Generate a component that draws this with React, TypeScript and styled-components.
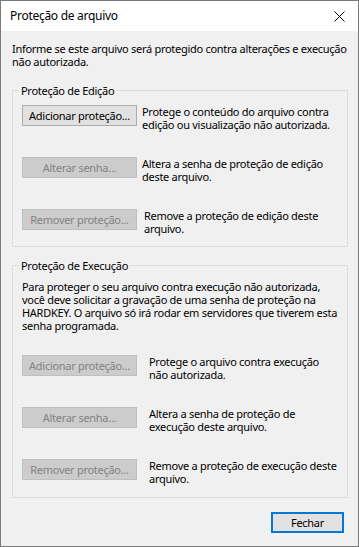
import React from 'react';
import styled, { createGlobalStyle } from 'styled-components';

const GlobalStyle = createGlobalStyle`
  html, body {
    margin: 0;
    padding: 0;
    background: #ffffff;
  }
  body {
    font-family: "Segoe UI", "Noto Sans", "Liberation Sans", sans-serif;
    font-size: 11px;
    letter-spacing: -0.28px;
    color: #000000;
  }
`;

const Window = styled.div`
  box-sizing: border-box;
  width: 359px;
  height: 547px;
  border: 1px solid #7a7a7a;
  background: #f0f0f0;
  display: flex;
  flex-direction: column;
`;

const TitleBar = styled.div`
  height: 30px;
  flex: none;
  background: #ffffff;
  display: flex;
  align-items: center;
  justify-content: space-between;
  padding-left: 9px;
`;

const Title = styled.span`
  font-size: 12px;
  line-height: 14px;
`;

const CloseButton = styled.div`
  width: 38px;
  height: 30px;
  display: flex;
  align-items: center;
  justify-content: center;
`;

const Body = styled.div`
  flex: 1;
  display: flex;
  flex-direction: column;
  padding: 11px 10px 0 11px;
`;

const Text = styled.div`
  line-height: 13px;
  white-space: nowrap;
`;

const Group = styled.fieldset<{ $top: number; $bottom: number }>`
  margin: ${(p) => p.$top}px 0 0 0;
  padding: 8px 10px ${(p) => p.$bottom}px 9px;
  border: 1px solid #dcdcdc;
  min-width: 0;
`;

const Legend = styled.legend`
  margin-left: -3px;
  padding: 0 2px;
  line-height: 13px;
`;

const Rows = styled.div<{ $top?: number }>`
  display: flex;
  flex-direction: column;
  gap: 26px;
  margin-top: ${(p) => p.$top || 0}px;
`;

const Row = styled.div`
  display: flex;
  align-items: flex-start;
  height: 26px;
`;

const Button = styled.button<{ $disabled?: boolean }>`
  box-sizing: border-box;
  width: 115px;
  height: 21px;
  flex: none;
  padding: 0;
  margin: 0;
  font-family: inherit;
  font-size: inherit;
  letter-spacing: inherit;
  line-height: 13px;
  border: 1px solid ${(p) => (p.$disabled ? '#bfbfbf' : '#adadad')};
  background: ${(p) => (p.$disabled ? '#cccccc' : '#e1e1e1')};
  color: ${(p) => (p.$disabled ? '#838383' : '#000000')};
  white-space: nowrap;
`;

const Desc = styled(Text)<{ $gap: number }>`
  margin-left: ${(p) => p.$gap}px;
`;

const Footer = styled.div`
  display: flex;
  justify-content: flex-end;
  margin-top: 14px;
  padding-right: 4px;
`;

const DefaultButton = styled.button`
  box-sizing: border-box;
  width: 73px;
  height: 21px;
  padding: 0;
  font-family: inherit;
  font-size: inherit;
  letter-spacing: inherit;
  line-height: 13px;
  color: #000000;
  background: #e1e1e1;
  border: 2px solid #0078d7;
`;

interface Action {
  label: string;
  disabled?: boolean;
  lines: string[];
}

const edicao: Action[] = [
  {
    label: 'Adicionar proteção...',
    lines: ['Protege o conteúdo do arquivo contra', 'edição ou visualização não autorizada.'],
  },
  {
    label: 'Alterar senha...',
    disabled: true,
    lines: ['Altera a senha de proteção de edição', 'deste arquivo.'],
  },
  {
    label: 'Remover proteção...',
    disabled: true,
    lines: ['Remove a proteção de edição deste', 'arquivo.'],
  },
];

const execucao: Action[] = [
  {
    label: 'Adicionar proteção...',
    disabled: true,
    lines: ['Protege o arquivo contra execução', 'não autorizada.'],
  },
  {
    label: 'Alterar senha...',
    disabled: true,
    lines: ['Altera a senha de proteção de', 'execução deste arquivo.'],
  },
  {
    label: 'Remover proteção...',
    disabled: true,
    lines: ['Remove a proteção de execução deste', 'arquivo.'],
  },
];

const Lines = ({ lines }: { lines: string[] }) => (
  <>
    {lines.map((l) => (
      <div key={l}>{l}</div>
    ))}
  </>
);

const ActionList = ({ items, gaps, top }: { items: Action[]; gaps: number[]; top?: number }) => (
  <Rows $top={top}>
    {items.map((a, i) => (
      <Row key={a.label}>
        <Button $disabled={a.disabled}>{a.label}</Button>
        <Desc $gap={gaps[i]}>
          <Lines lines={a.lines} />
        </Desc>
      </Row>
    ))}
  </Rows>
);

export default function App() {
  return (
    <>
      <GlobalStyle />
      <Window>
        <TitleBar>
          <Title>Proteção de arquivo</Title>
          <CloseButton>
            <svg width="11" height="11" viewBox="0 0 11 11">
              <path d="M0.5 0.5 L10.5 10.5 M10.5 0.5 L0.5 10.5" stroke="#000" strokeWidth="1" fill="none" />
            </svg>
          </CloseButton>
        </TitleBar>
        <Body>
          <Text>
            <Lines lines={['Informe se este arquivo será protegido contra alterações e execução', 'não autorizada.']} />
          </Text>

          <Group $top={16} $bottom={11}>
            <Legend>Proteção de Edição</Legend>
            <ActionList items={edicao} gaps={[5, 5, 7]} />
          </Group>

          <Group $top={12} $bottom={12}>
            <Legend>Proteção de Execução</Legend>
            <Text>
              <Lines
                lines={[
                  'Para proteger o seu arquivo contra execução não autorizada,',
                  'você deve solicitar a gravação de uma senha de proteção na',
                  'HARDKEY. O arquivo só irá rodar em servidores que tiverem esta',
                  'senha programada.',
                ]}
              />
            </Text>
            <ActionList items={execucao} gaps={[12, 12, 12]} top={23} />
          </Group>

          <Footer>
            <DefaultButton>Fechar</DefaultButton>
          </Footer>
        </Body>
      </Window>
    </>
  );
}
